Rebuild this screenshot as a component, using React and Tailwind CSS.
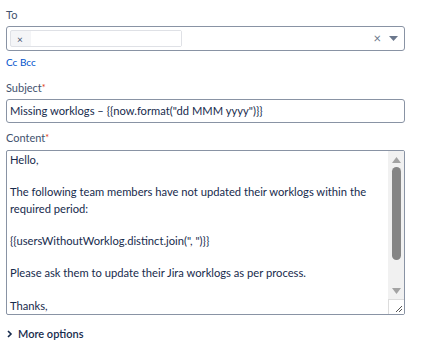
export default function App() {
  const font = { fontFamily: 'Lato, "Noto Sans", sans-serif' }
  return (
    <div className="w-[423px] h-[358px] bg-white text-[#172b4d] overflow-hidden" style={font}>
      <div className="pl-[6px] pr-[18px] pt-[7px]">
        <label className="block text-[11px] leading-[16px] text-[#42526e]">To</label>
        <div className="mt-[3px] h-[25px] border border-[#8993a4] rounded-[3px] flex items-center pl-[3px] pr-[6px]">
          <div className="h-[17px] w-[172px] border border-[#dfe1e6] rounded-[2px] bg-[#f4f5f7] flex items-center">
            <span className="text-[10px] leading-none text-[#42526e] ml-[6px]">×</span>
            <div className="ml-[8px] flex-1 h-full bg-white" />
          </div>
          <div className="flex-1" />
          <span className="text-[13px] leading-none text-[#6b778c] mr-[8px]">×</span>
          <svg width="9" height="6" viewBox="0 0 9 6"><path d="M0 0h9L4.5 5z" fill="#6b778c" /></svg>
        </div>
        <div className="mt-[4px] text-[10px] leading-[14px] text-[#0052cc]">Cc Bcc</div>

        <label className="block mt-[11px] text-[11px] leading-[16px] text-[#42526e]">
          Subject<span className="text-[#de350b] text-[9px] align-top">*</span>
        </label>
        <div className="mt-[3px] h-[24px] border border-[#8993a4] rounded-[3px] flex items-center px-[3px] text-[11.2px] text-[#172b4d]">
          Missing worklogs – {'{{now.format("dd MMM yyyy")}}'}
        </div>

        <label className="block mt-[7px] text-[11px] leading-[16px] text-[#42526e]">
          Content<span className="text-[#de350b] text-[9px] align-top">*</span>
        </label>
        <div className="mt-[4px] h-[165px] border border-[#8993a4] rounded-[2px] flex overflow-hidden">
          <div className="flex-1 pl-[3px] pt-[1px] text-[11.2px] leading-[16.2px] text-[#172b4d]">
            <div>Hello,</div>
            <div>&nbsp;</div>
            <div>The following team members have not updated their worklogs within the required period:</div>
            <div>&nbsp;</div>
            <div>{'{{usersWithoutWorklog.distinct.join(", ")}}'}</div>
            <div>&nbsp;</div>
            <div>Please ask them to update their Jira worklogs as per process.</div>
            <div>&nbsp;</div>
            <div>Thanks,</div>
          </div>
          <div className="w-[16px] bg-[#f1f1f1] flex flex-col items-center">
            <svg className="mt-[6px]" width="9" height="6" viewBox="0 0 9 6"><path d="M4.5 0L9 6H0z" fill="#a3a3a3" /></svg>
            <div className="mt-[4px] w-[9px] h-[93px] rounded-full bg-[#858585]" />
            <div className="flex-1" />
            <svg className="mb-[5px]" width="9" height="6" viewBox="0 0 9 6"><path d="M0 0h9L4.5 6z" fill="#a3a3a3" /></svg>
            <div className="w-[16px] h-[15px] bg-white border-l border-t border-[#dcdcdc] relative">
              <svg className="absolute right-[1px] bottom-[1px]" width="9" height="9" viewBox="0 0 9 9">
                <path d="M8 2L2 8M8 5L5 8" stroke="#555" strokeWidth="1" />
              </svg>
            </div>
          </div>
        </div>

        <div className="mt-[12px] flex items-center text-[11px] leading-[14px] text-[#172b4d] font-semibold">
          <svg className="ml-[1px] mr-[5px]" width="6" height="8" viewBox="0 0 6 8"><path d="M1 1l3 3-3 3" stroke="#172b4d" strokeWidth="1.6" fill="none" /></svg>
          More options
        </div>
      </div>
    </div>
  )
}
